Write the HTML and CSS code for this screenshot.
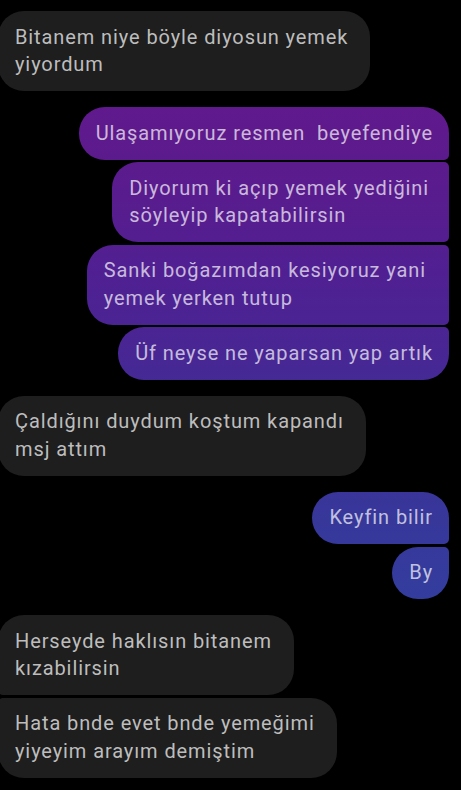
FILE: index.html
```html
<!DOCTYPE html>
<html lang="tr">
<head>
<meta charset="utf-8">
<title>Sohbet</title>
<link rel="stylesheet" href="styles.css">
</head>
<body>
<main class="chat">
  <section class="group received">
    <div class="bubble single">Bitanem niye böyle diyosun yemek<br>yiyordum</div>
  </section>
  <section class="group sent">
    <div class="bubble first">Ulaşamıyoruz resmen&nbsp; beyefendiye</div>
    <div class="bubble mid wrap">Diyorum ki açıp yemek yediğini<br>söyleyip kapatabilirsin</div>
    <div class="bubble mid wrap wide">Sanki boğazımdan kesiyoruz yani<br>yemek yerken tutup</div>
    <div class="bubble last">Üf neyse ne yaparsan yap artık</div>
  </section>
  <section class="group received">
    <div class="bubble single">Çaldığını duydum koştum kapandı<br>msj attım</div>
  </section>
  <section class="group sent">
    <div class="bubble first">Keyfin bilir</div>
    <div class="bubble last">By</div>
  </section>
  <section class="group received">
    <div class="bubble first">Herseyde haklısın bitanem<br>kızabilirsin</div>
    <div class="bubble last">Hata bnde evet bnde yemeğimi<br>yiyeyim arayım demiştim</div>
  </section>
</main>
</body>
</html>
```

FILE: styles.css
```css
html, body {
  margin: 0;
  padding: 0;
  background: #000;
}

body {
  width: 461px;
  height: 790px;
  overflow: hidden;
  font-family: Roboto, "Noto Sans", "Liberation Sans", sans-serif;
  font-size: 20px;
  line-height: 27.5px;
  letter-spacing: 0.9px;
}

.chat {
  display: flex;
  flex-direction: column;
  gap: 16px;
  padding: 11px 12px 0 0;
}

.group {
  display: flex;
  flex-direction: column;
  gap: 2.5px;
}

.bubble {
  white-space: nowrap;
  padding: 12.5px 16px 12.5px 17px;
  border-radius: 26px;
}

.received {
  align-items: flex-start;
}

.received .bubble {
  margin-left: -2px;
  padding-right: 22px;
  background: #1e1e1e;
  color: #bdbdbd;
}

.received .first {
  border-bottom-left-radius: 5px;
}

.received .last {
  border-top-left-radius: 5px;
}

.sent {
  align-items: flex-end;
}

.sent .bubble {
  color: rgba(255, 255, 255, 0.7);
  background: linear-gradient(to bottom,
    #661790 0px,
    #5e1a8c 130px,
    #581c8e 200px,
    #4e2193 290px,
    #482693 350px,
    #3c3198 450px,
    #37379a 520px,
    #333d9d 600px,
    #303f9f 790px) fixed;
}

.sent .wrap {
  padding-right: 20px;
}

.sent .wide {
  padding-right: 23px;
}

.sent .first {
  border-bottom-right-radius: 5px;
}

.sent .mid {
  border-top-right-radius: 5px;
  border-bottom-right-radius: 5px;
}

.sent .last {
  border-top-right-radius: 5px;
}
```
